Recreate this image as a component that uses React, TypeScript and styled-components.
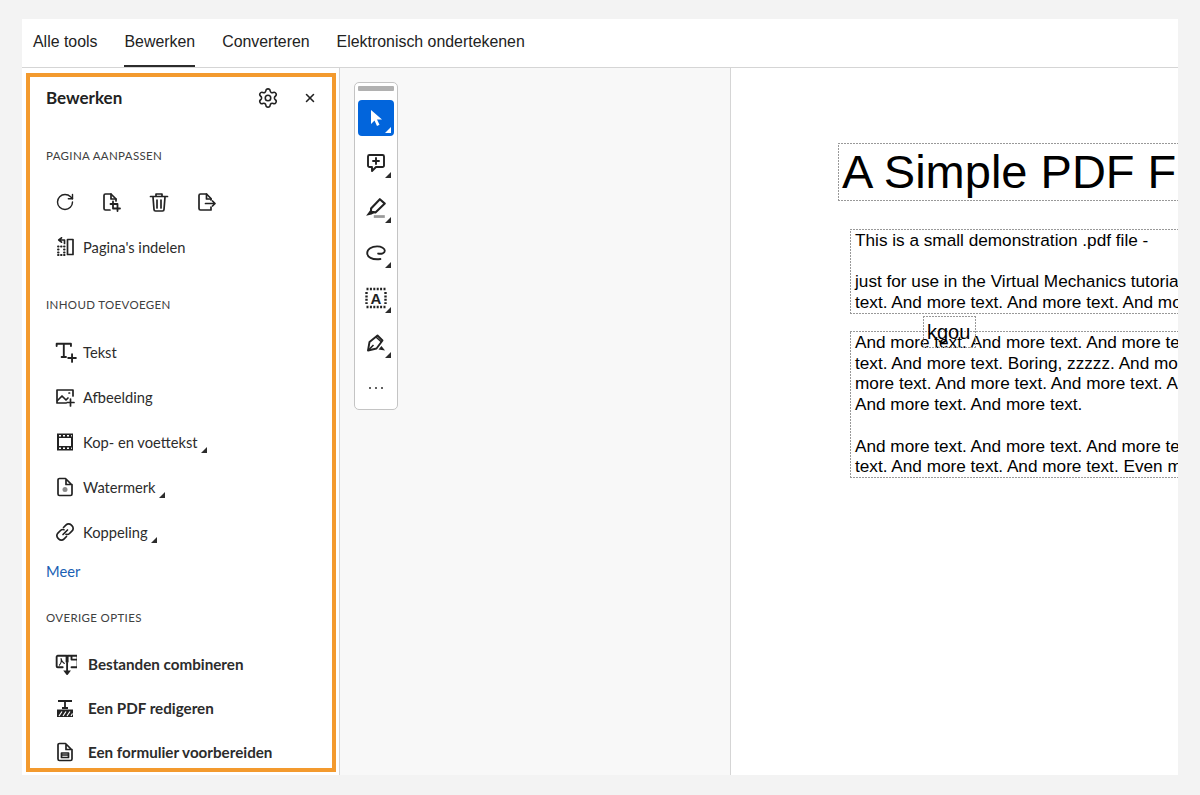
import * as React from 'react'
import styled, { createGlobalStyle } from 'styled-components'
import { RotateCw, Settings, X } from 'lucide-react'

const ink = '#222'

const Ico: React.FC<{ children: React.ReactNode; size?: number }> = ({ children, size = 20 }) => (
  <svg width={size} height={size} viewBox="0 0 20 20" fill="none" stroke={ink} strokeWidth="1.7" strokeLinecap="round" strokeLinejoin="round">
    {children}
  </svg>
)

const DocCrop = () => (
  <Ico>
    <path d="M9 18H4.500A1.500 1.500 0 0 1 3 16.500v-13A1.500 1.500 0 0 1 4.500 2H10l5 5v2" />
    <path d="M10 2v5h5" />
    <path d="M12 9.500v7h7M9.500 12h7v7" strokeWidth="1.800" />
  </Ico>
)
const Trash = () => (
  <Ico>
    <path d="M1.500 4.500h17M7 4V2h6v2M4 5l1 12.500A1.500 1.500 0 0 0 6.500 19h7a1.500 1.500 0 0 0 1.500-1.500L16 5M8 8v8M12 8v8" />
  </Ico>
)
const DocExport = () => (
  <Ico>
    <path d="M15 8V6.500L10.500 2H4.500A1.500 1.500 0 0 0 3 3.500v13A1.500 1.500 0 0 0 4.500 18H15v-3" />
    <path d="M10.500 2v5H15M9.500 11.500H19M16.500 9l2.500 2.500-2.500 2.500" />
  </Ico>
)
const Arrange = () => (
  <Ico>
    <path d="M12.500 2.500h5.500v15h-5.500z" />
    <path d="M3 9.500h.6M6 9.500h.6M9 9.500h.6M3 12.500h.6M3 15.500h.6M3 18h.6M6 18h.6M9 18h.6M9 12.500h.6M9 15.500h.6" strokeWidth="1.900" />
    <path d="M9.500 6.500V3H4M6.500 .8 3.800 3l2.700 2.200" />
  </Ico>
)
const TextPlus = () => (
  <Ico size={22}>
    <path d="M1.500 4.500V2.500h13v2M8 2.500v12M6 14.500h4M15.500 12v7M12 15.500h7" />
  </Ico>
)
const ImagePlus = () => (
  <Ico>
    <path d="M18 9V3H2v13h9" />
    <path d="M2.500 13.500 7 9l4 4 2-2M14 6h.6M15.500 12v7M12 15.500h7" />
  </Ico>
)
const Film = () => (
  <svg width="20" height="20" viewBox="0 0 20 20">
    <path fill={ink} d="M2 1.500h16v17H2z" />
    <path fill="#fff" d="M4 6h12v8H4zM4 3h2v1.500H4zM8 3h2v1.500H8zM12 3h2v1.500h-2zM16 3h.8v1.500H16zM4 15.500h2V17H4zM8 15.500h2V17H8zM12 15.500h2V17h-2zM16 15.500h.8V17H16z" />
  </svg>
)
const DocMark = () => (
  <Ico>
    <path d="M10.500 1.500h-6A1.500 1.500 0 0 0 3 3v14a1.500 1.500 0 0 0 1.500 1.500h11A1.500 1.500 0 0 0 17 17V8zM11 2v5.500h6" />
    <circle cx="10" cy="12.500" r="2.500" fill="#8a8a8a" stroke="none" />
  </Ico>
)
const LinkIcon = () => (
  <Ico>
    <path d="M8 12.500 12.500 8M8.500 5.500l2.600-2.600a3.500 3.500 0 0 1 5 0l1 1a3.500 3.500 0 0 1 0 5l-2.600 2.600a3.500 3.500 0 0 1-3.500.8" />
    <path d="M11.500 14.500l-2.600 2.600a3.500 3.500 0 0 1-5 0l-1-1a3.500 3.500 0 0 1 0-5l2.600-2.600a3.500 3.500 0 0 1 3.500-.8" />
  </Ico>
)
const Combine = () => (
  <Ico size={22}>
    <path d="M10.500 2.500H2.500a1 1 0 0 0-1 1V12a1 1 0 0 0 1 1H7M11.500 2.500h8a1 1 0 0 1 1 1V12a1 1 0 0 1-1 1H15M10.500 2.500V8M11.500 2.500V8M15 2.500v3.500h5.500" />
    <path d="M4 11c1.500-1.500 2-4 1.500-6 .5 2.500 1.500 3.500 3 4.500" strokeWidth="1" />
    <path d="M11 9v8" />
    <path d="M7.500 16h7L11 20.500z" fill={ink} stroke="none" />
  </Ico>
)
const EditPdf = () => (
  <svg width="20" height="20" viewBox="0 0 20 20">
    <path fill="none" stroke={ink} strokeWidth="1.800" d="M3 3h14M10 3v7M7 10h6" />
    <path fill={ink} d="M2 11.500h16V19H2z" />
    <path stroke="#fff" strokeWidth="1.200" d="M4 18l3-4.500M8 18l3-4.500M12 18l3-4.500M16 18l1.500-2.500" />
  </svg>
)
const FormDoc = () => (
  <Ico>
    <path d="M10.500 1.500h-6A1.500 1.500 0 0 0 3 3v14a1.500 1.500 0 0 0 1.500 1.500h11A1.500 1.500 0 0 0 17 17V8zM11 2v5.500h6" />
    <path d="M6.500 11h7v4.500h-7zM6.500 13h7" />
  </Ico>
)

const CursorIcon = () => (
  <svg width="20" height="20" viewBox="0 0 20 20">
    <path fill="#fff" d="M5 2v14l3.500-3.500L11 18l2.500-1.200L11 11.500h5z" />
  </svg>
)
const CommentPlus = () => (
  <Ico>
    <path d="M3.500 2h13A1.500 1.500 0 0 1 18 3.500v9a1.500 1.500 0 0 1-1.500 1.500H10l-4 4v-4H3.500A1.500 1.500 0 0 1 2 12.500v-9A1.500 1.500 0 0 1 3.500 2z" strokeWidth="1.900" />
    <path d="M10 5v6M7 8h6" strokeWidth="1.900" />
  </Ico>
)
const Highlighter = () => (
  <svg width="22" height="22" viewBox="0 0 20 20" fill="none">
    <path stroke={ink} strokeWidth="1.900" strokeLinejoin="round" d="M5.500 10.500 13.500 2l4.500 4-8.500 8-4-.5z" />
    <path fill={ink} d="M5 11.500l3.500 3-2.500 1.500-5 1z" />
    <path fill="#9a9a9a" d="M8 16.500h10v2.500H8z" />
  </svg>
)
const Lasso = () => (
  <Ico size={22}>
    <path d="M14 15.500C6 16.500 2 13.500 2 10 2 6.500 6 4 11 4c4 0 7 1.800 7 4 0 2-3 3.200-6 2.500" strokeWidth="1.700" />
  </Ico>
)
const TextSelect = () => (
  <svg width="22" height="22" viewBox="0 0 22 22" fill="none" style={{ fontFamily: 'Liberation Sans' }}>
    <path stroke={ink} strokeWidth="2.400" strokeDasharray="2 1.400" d="M1.500 2h19M1.500 20h19M1.500 5v12M20.500 5v12" />
    <text x="11" y="16.500" textAnchor="middle" fontSize="15" fontWeight="700" fill={ink}>A</text>
  </svg>
)
const PenTool = () => (
  <svg width="20" height="20" viewBox="0 0 20 20" fill="none">
    <path stroke={ink} strokeWidth="1.900" strokeLinejoin="round" d="M2 17.500 3.500 9l8-6.500 5 5-6 8z" />
    <path stroke={ink} strokeWidth="1.600" d="M2 17.500 7.500 12M10 4l5.500 5" />
    <path fill={ink} d="M12.500 16.500l3-3.500 3.500 4.500z" />
  </svg>
)

const GlobalStyle = createGlobalStyle`
  html, body {
    margin: 0;
    background: #f3f3f3;
  }
`

const Screen = styled.div`
  box-sizing: border-box;
  width: 1200px;
  height: 795px;
  padding: 19px 22px 20px;
  overflow: hidden;
`

const Win = styled.div`
  display: flex;
  flex-direction: column;
  height: 100%;
  background: #fff;
`

const TabBar = styled.nav`
  box-sizing: border-box;
  display: flex;
  gap: 27px;
  height: 49px;
  padding-left: 11px;
  border-bottom: 1px solid #d5d5d5;
  flex-shrink: 0;
`

const Tab = styled.div<{ $active?: boolean }>`
  display: flex;
  align-items: center;
  height: 48px;
  box-sizing: border-box;
  font: 15.9px 'Liberation Sans', Arial, sans-serif;
  color: #222;
  border-bottom: 2px solid ${p => (p.$active ? '#2c2c2c' : 'transparent')};
`

const Body = styled.div`
  display: flex;
  flex: 1;
  min-height: 0;
`

const Side = styled.aside`
  box-sizing: border-box;
  width: 318px;
  flex-shrink: 0;
  padding: 5px 3px 0 4px;
  border-right: 1px solid #d5d5d5;
`

const Panel = styled.div`
  box-sizing: border-box;
  height: 699px;
  border: 4px solid #f39a2e;
  padding-left: 16px;
  overflow: hidden;
  font-family: Lato, 'Noto Sans', sans-serif;
  color: #2c2c2c;
`

const PanelHead = styled.header`
  display: flex;
  align-items: center;
  height: 40px;
  padding: 0 15px 0 0;
`

const PanelTitle = styled.h2`
  flex: 1;
  margin: 0;
  font-size: 17px;
  font-weight: 700;
  color: #222;
`

const HeadIcons = styled.div`
  display: flex;
  align-items: center;
  gap: 24px;
  margin-top: 2px;
`

const SectionLabel = styled.h3<{ $top: number; $bottom: number }>`
  margin: ${p => p.$top}px 0 ${p => p.$bottom}px;
  height: 20px;
  line-height: 20px;
  font-size: 11.5px;
  font-weight: 400;
  letter-spacing: 0.35px;
  text-transform: uppercase;
  color: #404040;
`

const IconRow = styled.div`
  display: flex;
  align-items: center;
  gap: 26px;
  height: 45px;
  padding-left: 9px;

  & > svg:nth-child(3) {
    margin-left: 2px;
  }

  & > svg:last-child {
    margin-left: 1px;
  }
`

const ToolRow = styled.div<{ $strong?: boolean }>`
  display: flex;
  align-items: center;
  height: ${p => (p.$strong ? 44 : 45)}px;
  padding-left: 9px;
  font-size: ${p => (p.$strong ? 15.2 : 14.7)}px;
  font-weight: ${p => (p.$strong ? 700 : 400)};

  & > svg {
    flex-shrink: 0;
  }
`

const IconSlot = styled.span<{ $wide?: boolean }>`
  display: flex;
  align-items: center;
  width: ${p => (p.$wide ? 33 : 28)}px;
`

const MoreArrow = styled.span`
  align-self: flex-end;
  width: 0;
  height: 0;
  margin: 0 0 11px 3px;
  border-style: solid;
  border-width: 0 0 6px 6px;
  border-color: transparent transparent #2c2c2c transparent;
`

const MoreLink = styled.a`
  display: block;
  height: 20px;
  margin-top: 7px;
  line-height: 20px;
  font-size: 14.7px;
  color: #1a5fb4;
`

const Stage = styled.main`
  display: flex;
  flex: 1;
  min-width: 0;
`

const Gutter = styled.div`
  box-sizing: border-box;
  width: 391px;
  flex-shrink: 0;
  padding: 14px 0 0 14px;
  background: #f8f8f8;
  border-right: 1px solid #d5d5d5;
`

const ToolBox = styled.div`
  box-sizing: border-box;
  display: flex;
  flex-direction: column;
  align-items: center;
  gap: 9px;
  width: 44px;
  height: 328px;
  padding: 3px 3px 0;
  background: #fff;
  border: 1px solid #c4c4c4;
  border-radius: 5px;
`

const Grip = styled.div`
  flex-shrink: 0;
  width: 36px;
  height: 5px;
  background: #b1b1b1;
  border-radius: 1px;
`

const ToolButton = styled.button<{ $active?: boolean }>`
  position: relative;
  display: flex;
  align-items: center;
  justify-content: center;
  flex-shrink: 0;
  width: 36px;
  height: 36px;
  padding: 0;
  border: 0;
  border-radius: 4px;
  background: ${p => (p.$active ? '#0265dc' : 'transparent')};
`

const Corner = styled.span<{ $light?: boolean }>`
  position: absolute;
  right: 3px;
  bottom: 3px;
  width: 0;
  height: 0;
  border-style: solid;
  border-width: 0 0 6px 6px;
  border-color: transparent transparent ${p => (p.$light ? '#fff' : '#2c2c2c')} transparent;
`

const Dots = styled.span`
  display: flex;
  gap: 4px;

  & > i {
    width: 2px;
    height: 2px;
    background: #2c2c2c;
    border-radius: 50%;
  }
`

const PageSheet = styled.section`
  position: relative;
  flex: 1;
  min-width: 0;
  overflow: hidden;
  background: #fff;
`

const TextBox = styled.div<{ $left: number; $top: number; $width: number; $height: number }>`
  position: absolute;
  left: ${p => p.$left}px;
  top: ${p => p.$top}px;
  box-sizing: border-box;
  width: ${p => p.$width}px;
  height: ${p => p.$height}px;
  padding: 1px;
  background-image:
    repeating-linear-gradient(90deg, #999 0 2px, transparent 2px 3px),
    repeating-linear-gradient(90deg, #999 0 2px, transparent 2px 3px),
    repeating-linear-gradient(0deg, #999 0 2px, transparent 2px 3px),
    repeating-linear-gradient(0deg, #999 0 2px, transparent 2px 3px);
  background-size: 100% 1px, 100% 1px, 1px 100%, 1px 100%;
  background-position: top left, bottom left, top left, top right;
  background-repeat: no-repeat;
  font-family: 'Liberation Sans', Arial, sans-serif;
  color: #000;
  white-space: nowrap;
`

const TitleText = styled.div`
  padding-left: 3px;
  font-size: 47px;
  line-height: 56px;
`

const BodyLine = styled.div<{ $gap?: number }>`
  padding-left: 4px;
  margin-top: ${p => p.$gap ?? 0}px;
  font-size: 17.2px;
  line-height: 20.5px;
`

const Stray = styled.div`
  padding-left: 3px;
  font-size: 20px;
  line-height: 30px;
`

const App: React.FC = () => (
  <Screen>
    <GlobalStyle />
    <Win>
      <TabBar>
        <Tab>Alle tools</Tab>
        <Tab $active>Bewerken</Tab>
        <Tab>Converteren</Tab>
        <Tab>Elektronisch ondertekenen</Tab>
      </TabBar>
      <Body>
        <Side>
          <Panel>
            <PanelHead>
              <PanelTitle>Bewerken</PanelTitle>
              <HeadIcons>
                <Settings size={22} color={ink} strokeWidth={1.7} />
                <X size={14} color={ink} strokeWidth={2.6} />
              </HeadIcons>
            </PanelHead>

            <SectionLabel $top={29} $bottom={13}>Pagina aanpassen</SectionLabel>
            <IconRow>
              <RotateCw size={20} color={ink} strokeWidth={1.7} />
              <DocCrop />
              <Trash />
              <DocExport />
            </IconRow>
            <ToolRow>
              <IconSlot><Arrange /></IconSlot>
              Pagina's indelen
            </ToolRow>

            <SectionLabel $top={26} $bottom={14}>Inhoud toevoegen</SectionLabel>
            <ToolRow>
              <IconSlot><TextPlus /></IconSlot>
              Tekst
            </ToolRow>
            <ToolRow>
              <IconSlot><ImagePlus /></IconSlot>
              Afbeelding
            </ToolRow>
            <ToolRow>
              <IconSlot><Film /></IconSlot>
              Kop- en voettekst
              <MoreArrow />
            </ToolRow>
            <ToolRow>
              <IconSlot><DocMark /></IconSlot>
              Watermerk
              <MoreArrow />
            </ToolRow>
            <ToolRow>
              <IconSlot><LinkIcon /></IconSlot>
              Koppeling
              <MoreArrow />
            </ToolRow>
            <MoreLink>Meer</MoreLink>

            <SectionLabel $top={27} $bottom={14}>Overige opties</SectionLabel>
            <ToolRow $strong>
              <IconSlot $wide><Combine /></IconSlot>
              Bestanden combineren
            </ToolRow>
            <ToolRow $strong>
              <IconSlot $wide><EditPdf /></IconSlot>
              Een PDF redigeren
            </ToolRow>
            <ToolRow $strong>
              <IconSlot $wide><FormDoc /></IconSlot>
              Een formulier voorbereiden
            </ToolRow>
          </Panel>
        </Side>

        <Stage>
          <Gutter>
            <ToolBox>
              <Grip />
              <ToolButton $active><CursorIcon /><Corner $light /></ToolButton>
              <ToolButton><CommentPlus /><Corner /></ToolButton>
              <ToolButton><Highlighter /><Corner /></ToolButton>
              <ToolButton><Lasso /><Corner /></ToolButton>
              <ToolButton><TextSelect /><Corner /></ToolButton>
              <ToolButton><PenTool /><Corner /></ToolButton>
              <ToolButton><Dots><i /><i /><i /></Dots></ToolButton>
            </ToolBox>
          </Gutter>

          <PageSheet>
            <TextBox $left={107} $top={75} $width={500} $height={58}>
              <TitleText>A Simple PDF File</TitleText>
            </TextBox>
            <TextBox $left={119} $top={161} $width={500} $height={85}>
              <BodyLine>This is a small demonstration .pdf file -</BodyLine>
              <BodyLine $gap={20.5}>just for use in the Virtual Mechanics tutorials. More text. And more</BodyLine>
              <BodyLine>text. And more text. And more text. And more text.</BodyLine>
            </TextBox>
            <TextBox $left={119} $top={263} $width={500} $height={147}>
              <BodyLine>And more text. And more text. And more text. And more</BodyLine>
              <BodyLine>text. And more text. Boring, zzzzz. And more text. And</BodyLine>
              <BodyLine>more text. And more text. And more text. And more text.</BodyLine>
              <BodyLine>And more text. And more text.</BodyLine>
              <BodyLine $gap={21.5}>And more text. And more text. And more text. And more</BodyLine>
              <BodyLine>text. And more text. And more text. Even more text.</BodyLine>
            </TextBox>
            <TextBox $left={192} $top={248} $width={53} $height={32}>
              <Stray>kgou</Stray>
            </TextBox>
          </PageSheet>
        </Stage>
      </Body>
    </Win>
  </Screen>
)

export default App
